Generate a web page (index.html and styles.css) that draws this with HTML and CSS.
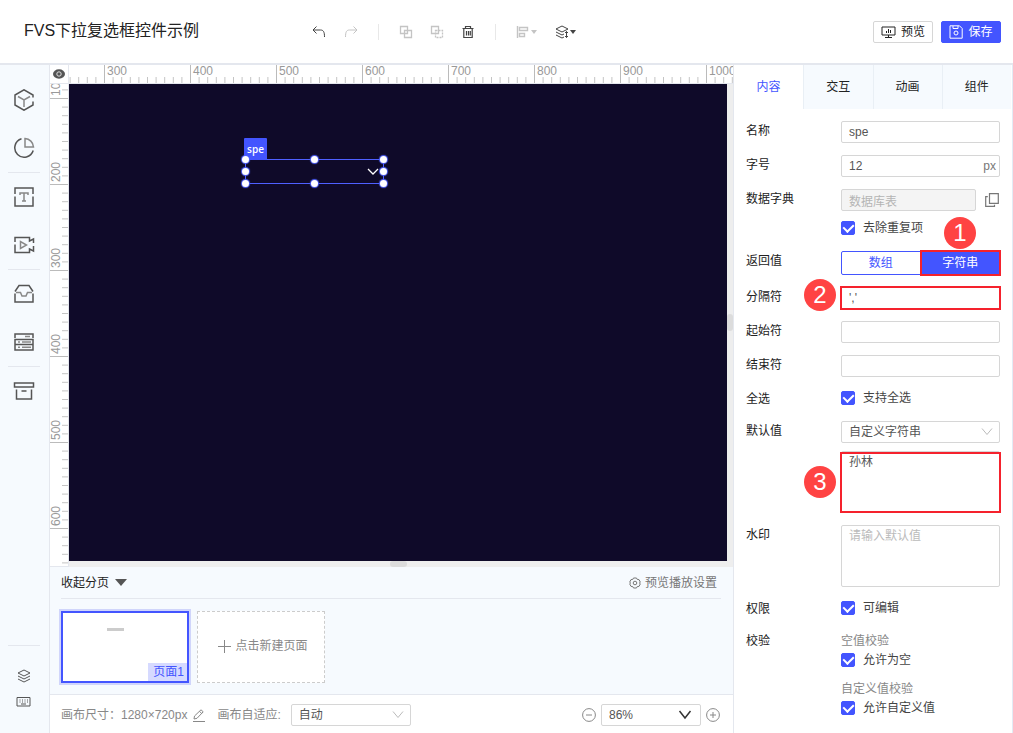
FILE: index.html
```html
<!DOCTYPE html>
<html lang="zh-CN">
<head>
<meta charset="utf-8">
<meta name="viewport" content="width=device-width, initial-scale=1">
<title>FVS下拉复选框控件示例</title>
<link rel="stylesheet" href="styles.css">
</head>
<body>
<div class="app">
  <header class="header">
    <h1 class="title">FVS下拉复选框控件示例</h1>
    <div class="toolbar">
      <button class="tool" aria-label="撤销"><svg width="14" height="14" viewBox="0 0 14 14"><path d="M4.500 1.500L1 5l3.500 3.500M1.200 5H8.500C11.500 5 12.500 7 12.500 12"/></svg></button>
      <button class="tool tool-redo faint" aria-label="重做"><svg width="14" height="14" viewBox="0 0 14 14"><path d="M9.500 1.500L13 5L9.500 8.500M12.800 5H5.500C2.500 5 1.500 7 1.500 12"/></svg></button>
      <span class="sep"></span>
      <button class="tool faint" aria-label="组合"><svg width="14" height="14" viewBox="0 0 14 14"><path d="M1.500 1.500h7v7h-7zM5.500 5.500h7v7h-7z" stroke-width="1.300"/></svg></button>
      <button class="tool tool-ungroup faint" aria-label="取消组合"><svg width="14" height="14" viewBox="0 0 14 14"><path d="M1.500 1.500h7v7h-7z" stroke-width="1.300"/><path d="M5.500 5.500h7v7h-7z" stroke-width="1.300" stroke-dasharray="2 1"/></svg></button>
      <button class="tool tool-delete" aria-label="删除"><svg width="14" height="14" viewBox="0 0 14 14"><path d="M1.500 3.500h11M4.500 3V1.500h5V3M2.800 4v8.500h8.400V4M5.500 6v4.500M7.500 6v4.500M9.300 6v4.500" stroke-width="1.200"/></svg></button>
      <span class="sep"></span>
      <button class="tool tool-wide faint" aria-label="对齐"><svg width="14" height="14" viewBox="0 0 14 14"><path d="M1.500 1v12M3.500 2.500h8v3h-8zM3.500 8.500h5v3h-5z" stroke-width="1.400"/></svg><svg width="6" height="4" viewBox="0 0 6 4"><path class="solid" d="M0 0h6L3 4z"/></svg></button>
      <button class="tool tool-wide" aria-label="层级"><svg width="14" height="14" viewBox="0 0 14 14"><path d="M1 4l6-3 6 3-6 3zM1 7l6 3 2-1M1 10l6 3 2-1M11.500 6.500v6M10 8l1.500-1.500L13 8M10 11l1.500 1.500L13 11"/></svg><svg width="6" height="4" viewBox="0 0 6 4"><path class="solid" d="M0 0h6L3 4z"/></svg></button>
    </div>
    <div class="actions">
      <button class="btn"><svg width="15" height="14" viewBox="0 0 15 14"><path d="M1 2h13v8H1zM7.500 10v2M4 12.500h7M5.500 8V6M7.500 8V4M9.500 8V5"/></svg>预览</button>
      <button class="btn btn-primary"><svg width="14" height="14" viewBox="0 0 14 14"><path d="M1 .8h9.500L13.200 3.500v9.700H1zM4 1v2.500h5V1"/><circle cx="7" cy="8" r="2"/></svg>保存</button>
    </div>
  </header>

  <div class="body">
    <nav class="sidebar">
      <button class="side" aria-label="模型"><svg width="22" height="22" viewBox="0 0 22 22"><path d="M20 12.500V16l-9 5.200L2 16V6l9-5.200L20 6v2.500"/><path class="inner" d="M5 7.500l6 3.500 6-3.500M11 11v7"/></svg></button>
      <button class="side" aria-label="图表"><svg width="22" height="22" viewBox="0 0 22 22"><path d="M8.500 1.800A9.400 9.400 0 1 0 20.200 13.500"/><path class="inner" d="M12 1.500a9 9 0 0 1 8.500 8.500H12z"/></svg></button>
      <span class="rule"></span>
      <button class="side" aria-label="文本"><svg width="22" height="22" viewBox="0 0 22 22"><path d="M2 8V2h18v6M2 10.500V20h18v-9.500"/><path class="inner" d="M7 9V7h8v2M11 7v8M9 15h4"/></svg></button>
      <button class="side" aria-label="视频"><svg width="22" height="22" viewBox="0 0 22 22"><path d="M2 8V3.500h14.500V7l4-2v4M2 10.500v8h14.500V15l4 2v-5"/><path class="inner" d="M7.500 7.500v7l6-3.500z"/></svg></button>
      <span class="rule"></span>
      <button class="side" aria-label="素材"><svg width="22" height="22" viewBox="0 0 22 22"><path d="M2 8.500L6 2.500h10l4 6M2 10.500V19h18v-8.500"/><path class="inner" d="M3 9.500h4.500L9 13h4l1.500-3.500H19"/></svg></button>
      <button class="side" aria-label="表格"><svg width="22" height="22" viewBox="0 0 22 22"><path d="M2 7V3h18v4M2 8.500h18v5H2zM2 13.500h18v5.500H2z"/><path class="inner" d="M12 5.500h5M5 11h2M9 11h9M5 16.300h2M9 16.300h9"/></svg></button>
      <span class="rule"></span>
      <button class="side" aria-label="归档"><svg width="22" height="22" viewBox="0 0 22 22"><path d="M1.500 3h19v4h-19zM3.500 9.500V19h15V9.500M8.500 11h5"/></svg></button>
      <div class="side-end">
        <span class="rule"></span>
        <button class="side-small" aria-label="图层"><svg width="14" height="14" viewBox="0 0 14 14"><path d="M1 4l6-3 6 3-6 3zM1 7l6 3 6-3M1 10l6 3 6-3"/></svg></button>
        <button class="side-small" aria-label="快捷键"><svg width="15" height="14" viewBox="0 0 15 14"><path d="M1 2.500h13v8.500H1zM3.500 5h1M6 5h1M8.500 5h1M11 5h1M3.500 7h1M6 7h1M8.500 7h1M11 7h1M5 9h5"/></svg></button>
      </div>
    </nav>

    <main class="center">
      <div class="stage">
        <button class="corner" aria-label="显示标尺"><svg width="12" height="10" viewBox="0 0 12 10"><ellipse cx="6" cy="5" rx="6" ry="4.700" class="solid"/><circle cx="6" cy="5" r="2.200" stroke="#ddd" fill="none"/></svg></button>
        <div class="ruler ruler-x">
          <svg width="100%" height="100%">
            <defs><pattern id="tx" x="35" y="0" width="86" height="18" patternUnits="userSpaceOnUse"><path d="M.5 0v18" stroke="#bbb"/><path d="M9.100 12v6M17.700 12v6M26.300 12v6M34.900 12v6M43.500 12v6M52.100 12v6M60.700 12v6M69.300 12v6M77.900 12v6" stroke="#c4c4c4"/></pattern></defs>
            <rect width="100%" height="18" fill="url(#tx)"/>
            <text x="38" y="10">300</text><text x="124" y="10">400</text><text x="210" y="10">500</text><text x="296" y="10">600</text><text x="382" y="10">700</text><text x="468" y="10">800</text><text x="554" y="10">900</text><text x="640" y="10">1000</text>
          </svg>
        </div>
        <div class="ruler ruler-y">
          <svg width="18" height="100%">
            <defs><pattern id="ty" x="0" y="14" width="18" height="86" patternUnits="userSpaceOnUse"><path d="M0 .5h18" stroke="#bbb"/><path d="M12 9.100h6M12 17.700h6M12 26.300h6M12 34.900h6M12 43.500h6M12 52.100h6M12 60.700h6M12 69.300h6M12 77.900h6" stroke="#c4c4c4"/></pattern></defs>
            <rect width="18" height="100%" fill="url(#ty)"/>
            <text transform="translate(10 12) rotate(-90)">100</text><text transform="translate(10 98) rotate(-90)">200</text><text transform="translate(10 184) rotate(-90)">300</text><text transform="translate(10 270) rotate(-90)">400</text><text transform="translate(10 356) rotate(-90)">500</text><text transform="translate(10 442) rotate(-90)">600</text>
          </svg>
        </div>
        <div class="viewport">
          <div class="canvas">
            <div class="widget">
              <span class="widget-tag">spe</span>
              <svg class="widget-arrow" width="12" height="8" viewBox="0 0 12 8"><path d="M1 1l5 5 5-5"/></svg>
              <i class="dot top left"></i><i class="dot top mid"></i><i class="dot top right"></i>
              <i class="dot half left"></i><i class="dot half right"></i>
              <i class="dot bottom left"></i><i class="dot bottom mid"></i><i class="dot bottom right"></i>
            </div>
          </div>
          <div class="track-y"><span class="thumb-y"></span></div>
          <div class="track-x"><span class="thumb-x"></span></div>
        </div>
      </div>

      <section class="pages">
        <div class="pages-head">
          <button class="fold">收起分页<svg width="12" height="7" viewBox="0 0 12 7"><path class="solid" d="M0 0h12L6 7z"/></svg></button>
          <button class="play"><svg width="12" height="12" viewBox="0 0 12 12"><path d="M4.500 1h3l.8 1.500 1.700.1L11.300 5 10.500 6l.8 1-1.300 2.400-1.700.1L7.500 11h-3l-.8-1.500L2 9.400.7 7l.8-1-.8-1L2 2.600l1.700-.1z"/><circle cx="6" cy="6" r="1.800"/></svg>预览播放设置</button>
        </div>
        <div class="thumbs">
          <div class="thumb"><span class="thumb-bar"></span><span class="thumb-name">页面1</span></div>
          <button class="add"><svg width="13" height="13" viewBox="0 0 13 13"><path d="M6.500 0v13M0 6.500h13"/></svg>点击新建页面</button>
        </div>
      </section>

      <footer class="status">
        <span class="size">画布尺寸：1280×720px</span>
        <button class="edit" aria-label="编辑尺寸"><svg width="13" height="13" viewBox="0 0 13 13"><path d="M1 12.500h12M2 10l.5-3L9 .8l2.200 2L5 9.300zM7.500 2.300l2.200 2.200"/></svg></button>
        <label class="fit-label" for="fit">画布自适应:</label>
        <span class="select fit"><select id="fit"><option>自动</option></select><svg width="12" height="8" viewBox="0 0 12 8"><path d="M1 .5l5 6 5-6"/></svg></span>
        <div class="zoom">
          <button class="round" aria-label="缩小"><svg width="14" height="14" viewBox="0 0 14 14"><circle cx="7" cy="7" r="6.400"/><path d="M4 7h6"/></svg></button>
          <span class="select scale"><select aria-label="缩放比例"><option>86%</option></select><svg width="14" height="10" viewBox="0 0 14 10"><path d="M1.500 1L7 8l5.500-7"/></svg></span>
          <button class="round" aria-label="放大"><svg width="14" height="14" viewBox="0 0 14 14"><circle cx="7" cy="7" r="6.400"/><path d="M4 7h6M7 4v6"/></svg></button>
        </div>
      </footer>
    </main>

    <aside class="panel">
      <div class="tabs" role="tablist">
        <button class="tab active" role="tab" aria-selected="true">内容</button>
        <button class="tab" role="tab">交互</button>
        <button class="tab" role="tab">动画</button>
        <button class="tab" role="tab">组件</button>
      </div>
      <form class="form">
        <div class="row"><label class="name" for="f-name">名称</label><input class="box" id="f-name" type="text" value="spe"></div>
        <div class="row"><label class="name" for="f-size">字号</label><span class="unit"><input class="box" id="f-size" type="text" value="12"><span class="suffix">px</span></span></div>
        <div class="row"><label class="name" for="f-dict">数据字典</label>
          <div class="stack">
            <div class="dict"><input class="box" id="f-dict" type="text" value="数据库表" disabled><button class="copy" type="button" aria-label="选择"><svg width="14" height="14" viewBox="0 0 14 14"><path d="M4.500.7h8.800v9.600H4.500zM2.800 3.700H.7v9.600h8.800v-1.500" stroke-width="1.200"/></svg></button></div>
            <label class="check"><input type="checkbox" checked>去除重复项</label>
          </div>
        </div>
        <div class="row"><span class="name">返回值</span>
          <div class="segment"><button type="button">数组</button><button type="button" class="on marked">字符串</button><span class="badge badge-one">1</span></div>
        </div>
        <div class="row"><label class="name" for="f-sep">分隔符</label><div class="holder"><input class="box marked" id="f-sep" type="text" value="','"><span class="badge badge-two">2</span></div></div>
        <div class="row"><label class="name" for="f-start">起始符</label><input class="box" id="f-start" type="text"></div>
        <div class="row"><label class="name" for="f-end">结束符</label><input class="box" id="f-end" type="text"></div>
        <div class="row"><span class="name">全选</span><label class="check"><input type="checkbox" checked>支持全选</label></div>
        <div class="row"><label class="name" for="f-def">默认值</label>
          <div class="stack">
            <span class="select"><select id="f-def"><option>自定义字符串</option></select><svg width="12" height="8" viewBox="0 0 12 8"><path d="M1 .5l5 6 5-6"/></svg></span>
            <div class="holder"><textarea class="box area" aria-label="默认值内容">孙林</textarea><span class="frame"></span><span class="badge badge-three">3</span></div>
          </div>
        </div>
        <div class="row"><label class="name" for="f-mark">水印</label><textarea class="box area" id="f-mark" placeholder="请输入默认值"></textarea></div>
        <div class="row"><span class="name">权限</span><label class="check"><input type="checkbox" checked>可编辑</label></div>
        <div class="row"><span class="name">校验</span>
          <div class="stack">
            <div class="group"><span class="hint">空值校验</span><label class="check"><input type="checkbox" checked>允许为空</label></div>
            <div class="group"><span class="hint">自定义值校验</span><label class="check"><input type="checkbox" checked>允许自定义值</label></div>
          </div>
        </div>
      </form>
    </aside>
  </div>
</div>
</body>
</html>
```

FILE: styles.css
```css
:root {
  --blue: #4355ff;
  --line: #e4e7ee;
  --border: #d6d6d6;
  --pale: #f6fafe;
  --red: #f5222d;
}

* { box-sizing: border-box; }

body {
  margin: 0;
  color: #222;
  background: #fff;
  font-family: "Liberation Sans", "Noto Sans CJK SC", sans-serif;
  font-size: 12px;
  line-height: 18px;
}

button, input, select, textarea {
  font: inherit;
  color: inherit;
  margin: 0;
}

button {
  padding: 0;
  border: 0;
  background: none;
  cursor: pointer;
}

svg { display: block; flex: none; fill: none; stroke: currentColor; }
.solid { fill: currentColor; stroke: none; }

.app { display: flex; flex-direction: column; min-height: 100vh; }

/* Header */
.header {
  display: flex;
  align-items: center;
  height: 65px;
  padding: 0 12px 0 24px;
  border-bottom: 2px solid var(--line);
}
.title {
  flex: none;
  width: 288px;
  margin: 0;
  padding-bottom: 2px;
  font-size: 16px;
  font-weight: 400;
  line-height: 24px;
}
.toolbar { display: flex; align-items: center; color: #444; }
.tool { display: flex; align-items: center; gap: 4px; }
.tool-redo { margin-left: 18px; }
.tool-ungroup { margin-left: 17px; }
.tool-delete { margin-left: 17px; }
.tool-wide { gap: 1px; }
.tool-wide + .tool-wide { margin-left: 18px; }
.faint { color: #c4c4c4; }
.sep { width: 1px; height: 16px; margin: 0 20px; background: #e8e8e8; }
.actions { display: flex; gap: 8px; margin-left: auto; }
.btn {
  display: flex;
  align-items: center;
  justify-content: center;
  gap: 5px;
  width: 60px;
  height: 22px;
  border: 1px solid var(--border);
  border-radius: 2px;
}
.btn-primary { color: #fff; background: var(--blue); border-color: var(--blue); }

.body { display: flex; flex: 1; }

/* Left icon bar */
.sidebar {
  display: flex;
  flex: none;
  flex-direction: column;
  align-items: center;
  width: 50px;
  padding: 11px 2px 18px 0;
  color: #555;
  background: var(--pale);
  border-right: 1px solid var(--line);
}
.side { display: grid; place-items: center; width: 48px; height: 48px; }
.side svg { stroke-width: 1.5; }
.side .inner { stroke: #888; }
.rule { width: 32px; height: 1px; background: var(--line); }
.side-end { display: flex; flex-direction: column; align-items: center; margin-top: auto; }
.side-end .rule { margin-bottom: 17px; }
.side-small { display: grid; place-items: center; width: 32px; height: 26px; }

/* Canvas with rulers */
.center {
  display: flex;
  flex: 1;
  flex-direction: column;
  min-width: 0;
  border-right: 1px solid var(--line);
}
.stage {
  display: grid;
  flex: 1;
  grid-template-columns: 19px 1fr;
  grid-template-rows: 19px 1fr;
}
.corner {
  display: grid;
  place-items: center;
  color: #555;
  border-right: 1px solid var(--line);
  border-bottom: 1px solid var(--line);
}
.ruler { overflow: hidden; min-width: 0; min-height: 0; }
.ruler rect { stroke: none; }
.ruler text { fill: #999; stroke: none; font-size: 12px; }
.ruler-x { border-bottom: 1px solid var(--line); }
.ruler-y { position: relative; border-right: 1px solid var(--line); border-bottom: 1px solid var(--line); }
.ruler-y svg { position: absolute; inset: 0; }
.viewport {
  display: grid;
  grid-template-columns: 1fr 6px;
  grid-template-rows: 1fr 6px;
  background: #eee;
}
.canvas { position: relative; background: #0f0a29; }
.track-y { display: flex; align-items: center; }
.thumb-y { width: 6px; height: 17px; border-radius: 3px; background: #dcdcdc; }
.track-x { display: flex; justify-content: center; }
.thumb-x { width: 17px; height: 6px; border-radius: 3px; background: #dcdcdc; }

.widget {
  position: absolute;
  left: 176px;
  top: 75px;
  width: 139px;
  height: 25px;
  border: 1px solid #4f60ff;
}
.widget-tag {
  position: absolute;
  left: -2px;
  bottom: 23px;
  width: 23px;
  height: 22px;
  border-radius: 1px;
  color: #fff;
  background: var(--blue);
  font: 600 10px/22px "Open Sans", sans-serif;
  text-align: center;
}
.widget-arrow { position: absolute; right: 4px; top: 8px; color: #fff; stroke-width: 1.3; }
.dot {
  position: absolute;
  width: 7px;
  height: 7px;
  border-radius: 50%;
  background: #fff;
  box-shadow: 0 0 1px 1px #4f60ff;
}
.dot.top { top: -4px; }
.dot.half { top: 8px; }
.dot.bottom { bottom: -4px; }
.dot.left { left: -4px; }
.dot.mid { left: 65px; }
.dot.right { right: -4px; }

/* Page strip */
.pages { padding: 0 12px 11px 11px; background: var(--pale); border-bottom: 1px solid var(--line); }
.pages-head {
  display: flex;
  align-items: center;
  justify-content: space-between;
  height: 32px;
  padding-right: 4px;
  border-bottom: 1px solid var(--line);
}
.fold { display: flex; align-items: center; gap: 6px; }
.fold svg { color: #555; }
.play { display: flex; align-items: center; gap: 4px; color: #777; }
.thumbs { display: flex; gap: 8px; padding-top: 12px; }
.thumb {
  position: relative;
  width: 128px;
  height: 72px;
  background: #fff;
  border: 2px solid var(--blue);
  box-shadow: 0 0 0 2px #d0d5fb;
}
.thumb-bar { position: absolute; left: 44px; top: 15px; width: 17px; height: 3px; background: #ccc; }
.thumb-name { position: absolute; right: 0; bottom: 0; padding: 0 3px 0 5px; color: var(--blue); background: #d6daff; }
.add {
  display: flex;
  align-items: center;
  justify-content: center;
  gap: 4px;
  width: 128px;
  height: 72px;
  padding: 0 0 2px 4px;
  color: #888;
  background: #fff;
  border: 1px dashed #ccc;
}

/* Status bar */
.status { display: flex; align-items: center; height: 38px; padding: 2px 13px 0 11px; color: #888; }
.edit { margin-left: 5px; }
.fit-label { margin-left: 12px; }
.fit { width: 120px; margin-left: 10px; }
.zoom { display: flex; align-items: center; gap: 5px; margin-left: auto; }
.scale { width: 100px; }

.select { position: relative; display: block; }
.select select {
  display: block;
  width: 100%;
  height: 22px;
  padding: 0 24px 0 7px;
  appearance: none;
  color: #555;
  background: #fff;
  border: 1px solid var(--border);
  border-radius: 2px;
}
.select svg { position: absolute; right: 7px; top: 7px; color: #bbb; pointer-events: none; }
.select.scale svg { top: 6px; right: 9px; color: #333; stroke-width: 1.5; }

/* Property panel */
.panel { flex: none; width: 279px; border-right: 1px solid #e2ebf5; }
.tabs { display: grid; grid-template-columns: repeat(4, 1fr); padding-right: 1px; }
.tab { height: 44px; background: var(--pale); border-left: 1px solid #e9eff5; }
.tab.active { color: var(--blue); background: #fff; border-left: 0; }
.form { display: flex; flex-direction: column; gap: 12px; padding: 12px; }
.row { display: grid; grid-template-columns: 95px 1fr; align-items: start; }
.name { padding-top: 1px; margin-bottom: -1px; }
.stack { display: flex; flex-direction: column; gap: 8px; }
.box {
  display: block;
  width: 100%;
  min-width: 0;
  height: 22px;
  padding: 0 7px;
  color: #555;
  background: #fff;
  border: 1px solid var(--border);
  border-radius: 2px;
}
.box:disabled { color: #b5b5b5; background: #f4f4f4; }
.area { height: 62px; padding-top: 1px; resize: none; overflow: hidden; }
.area::placeholder { color: #bbb; }
.unit, .holder { position: relative; }
.suffix { position: absolute; right: 4px; top: 2px; color: #777; }
.dict { display: flex; align-items: center; gap: 9px; padding-right: 1px; }
.copy { color: #777; }
.check { display: flex; align-items: center; gap: 8px; height: 18px; margin-bottom: 2px; line-height: 20px; color: #444; }
.check input {
  display: grid;
  place-items: center;
  flex: none;
  width: 14px;
  height: 14px;
  appearance: none;
  border-radius: 2px;
  border: 1px solid var(--blue);
}
.check input:checked { background: var(--blue); }
.check input:checked::after {
  content: "";
  width: 5px;
  height: 8px;
  margin-bottom: 2px;
  border: solid #fff;
  border-width: 0 2px 2px 0;
  transform: rotate(45deg);
}
.group { display: flex; flex-direction: column; gap: 2px; }
.hint { height: 18px; line-height: 20px; color: #888; }
.segment { position: relative; display: grid; grid-template-columns: 1fr 1fr; height: 24px; }
.segment button { color: var(--blue); border: 1px solid var(--blue); border-radius: 2px 0 0 2px; }
.segment .on { color: #fff; background: var(--blue); border-radius: 0; }
.marked { border-radius: 0; outline: 2px solid var(--red); outline-offset: -1px; }
.frame { position: absolute; inset: 1px -1px 0; border: 2px solid var(--red); pointer-events: none; }
.badge {
  position: absolute;
  width: 32px;
  height: 32px;
  border-radius: 50%;
  color: #fff;
  background: #ff4343;
  font-size: 24px;
  line-height: 32px;
  text-align: center;
}
.badge-one { right: 24px; bottom: 26px; }
.badge-two { left: -37px; top: -8px; }
.badge-three { left: -37px; top: 15px; }
```
